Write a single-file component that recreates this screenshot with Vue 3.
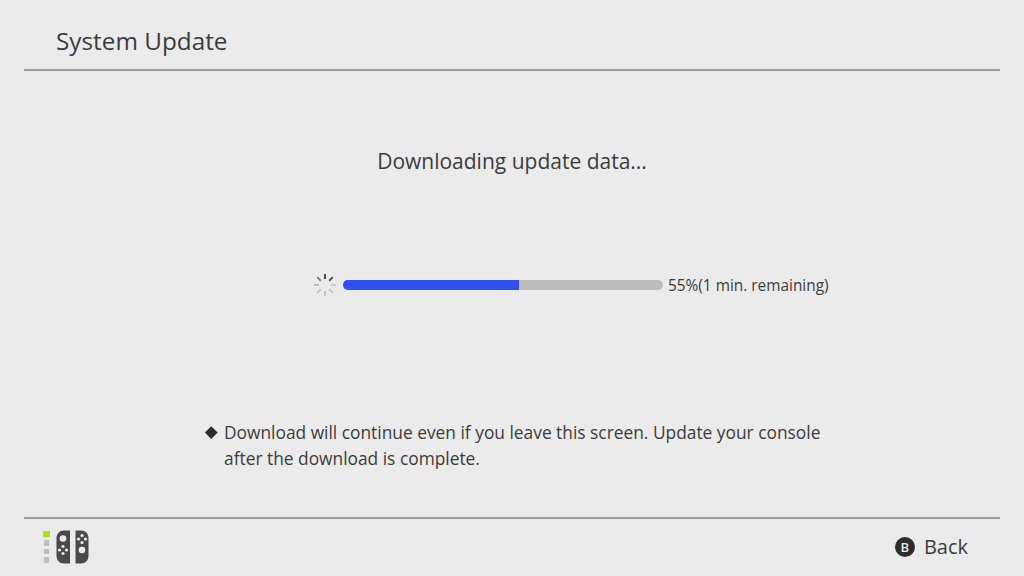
<script setup>
const percent = 55;
const ticks = [
	{ angle: 0, color: "#3a3a3a" },
	{ angle: 45, color: "#4a4a4a" },
	{ angle: 90, color: "#c4c4c4" },
	{ angle: 135, color: "#c4c4c4" },
	{ angle: 180, color: "#c4c4c4" },
	{ angle: 225, color: "#c4c4c4" },
	{ angle: 270, color: "#b4b4b4" },
	{ angle: 315, color: "#7a7a7a" },
];
</script>

<template>
	<div class="screen">
		<header class="head">
			<h1>System Update</h1>
		</header>

		<main class="body">
			<p class="title">Downloading update data...</p>

			<div class="progress">
				<svg class="spinner" width="26" height="26" viewBox="0 0 26 26">
					<line
						v-for="t in ticks"
						:key="t.angle"
						x1="13"
						y1="2"
						x2="13"
						y2="7"
						:stroke="t.color"
						stroke-width="1.8"
						:transform="`rotate(${t.angle} 13 13)`"
					/>
				</svg>
				<div class="track">
					<div class="fill" :style="{ width: percent + '%' }"></div>
				</div>
				<span class="status">{{ percent }}%(1 min. remaining)</span>
			</div>

			<div class="note">
				<span class="diamond"></span>
				<p>Download will continue even if you leave this screen. Update your console<br>after the download is complete.</p>
			</div>
		</main>

		<footer class="foot">
			<div class="controller">
				<div class="leds">
					<i class="on"></i>
					<i></i>
					<i></i>
					<i></i>
				</div>
				<svg width="33" height="34" viewBox="0 0 33 34">
					<path d="M14 0.5V33.5H8C3.5 33.5 0.5 30 0.5 26V8C0.5 4 3.5 0.5 8 0.5Z" fill="#4a4a4a" />
					<path d="M19.5 0.5V33.5H25C29.5 33.5 32.5 30 32.5 26V8C32.5 4 29.5 0.5 25 0.5Z" fill="#4a4a4a" />
					<circle cx="7" cy="8.5" r="3.3" fill="#ebebeb" />
					<circle cx="7" cy="16.5" r="1.6" fill="#ebebeb" />
					<circle cx="7" cy="23.5" r="1.6" fill="#ebebeb" />
					<circle cx="3.5" cy="20" r="1.6" fill="#ebebeb" />
					<circle cx="10.5" cy="20" r="1.6" fill="#ebebeb" />
					<circle cx="26" cy="20" r="3.3" fill="#ebebeb" />
					<circle cx="26" cy="5.5" r="1.6" fill="#ebebeb" />
					<circle cx="26" cy="12.5" r="1.6" fill="#ebebeb" />
					<circle cx="22.5" cy="9" r="1.6" fill="#ebebeb" />
					<circle cx="29.5" cy="9" r="1.6" fill="#ebebeb" />
				</svg>
			</div>
			<div class="back">
				<span class="btn">B</span>
				<span>Back</span>
			</div>
		</footer>
	</div>
</template>

<style>
html, body {
	margin: 0;
	background: #ebebeb;
}
</style>

<style scoped>
.screen {
	width: 1024px;
	height: 576px;
	display: flex;
	flex-direction: column;
	background: #ebebeb;
	color: #3c3c3c;
	font-family: "Open Sans", "Noto Sans", sans-serif;
	overflow: hidden;
}

.head {
	flex: none;
	height: 71px;
	margin: 0 24px;
	padding: 14px 0 0 32px;
	box-sizing: border-box;
	border-bottom: 2px solid #9b9b9b;
	display: flex;
	align-items: center;
}

.head h1 {
	margin: 0;
	font-size: 24.3px;
	font-weight: 400;
	line-height: 1;
}

.body {
	flex: 1;
	display: flex;
	flex-direction: column;
	align-items: center;
}

.title {
	margin: 76px 0 0;
	font-size: 21px;
	line-height: 28px;
	text-align: center;
}

.progress {
	align-self: flex-start;
	margin: 97px 0 0 312px;
	height: 26px;
	display: flex;
	align-items: center;
}

.spinner {
	flex: none;
	margin-right: 5px;
}

.track {
	flex: none;
	width: 320px;
	height: 10px;
	border-radius: 5px;
	background: #bcbcbc;
	overflow: hidden;
}

.fill {
	height: 100%;
	background: #2f50f0;
}

.status {
	margin-left: 5px;
	font-size: 15.4px;
	white-space: nowrap;
}

.note {
	align-self: flex-start;
	margin: 121px 0 0 205px;
	display: flex;
	align-items: flex-start;
}

.note p {
	margin: 0;
	font-size: 17.35px;
	line-height: 26px;
	white-space: nowrap;
}

.diamond {
	flex: none;
	width: 8.5px;
	height: 8.5px;
	margin: 9px 9px 0 1.5px;
	background: #2d2d2d;
	transform: rotate(45deg);
}

.foot {
	flex: none;
	height: 59px;
	margin: 0 24px;
	border-top: 2px solid #9b9b9b;
	display: flex;
	align-items: center;
	justify-content: space-between;
	padding: 0 32px 2px 19px;
	box-sizing: border-box;
}

.controller {
	display: flex;
	align-items: center;
	gap: 6px;
}

.leds {
	width: 7px;
	display: flex;
	flex-direction: column;
	align-items: center;
	gap: 3px;
}

.leds i {
	display: block;
	width: 5.5px;
	height: 5.5px;
	background: #bdbdbd;
}

.leds i.on {
	width: 7px;
	height: 6.5px;
	background: #a6e619;
}

.back {
	display: flex;
	align-items: center;
	gap: 9px;
	font-size: 20px;
}

.btn {
	width: 20px;
	height: 20px;
	border-radius: 50%;
	background: #2d2d2d;
	color: #ebebeb;
	font-size: 13px;
	font-weight: 600;
	display: flex;
	align-items: center;
	justify-content: center;
}
</style>
